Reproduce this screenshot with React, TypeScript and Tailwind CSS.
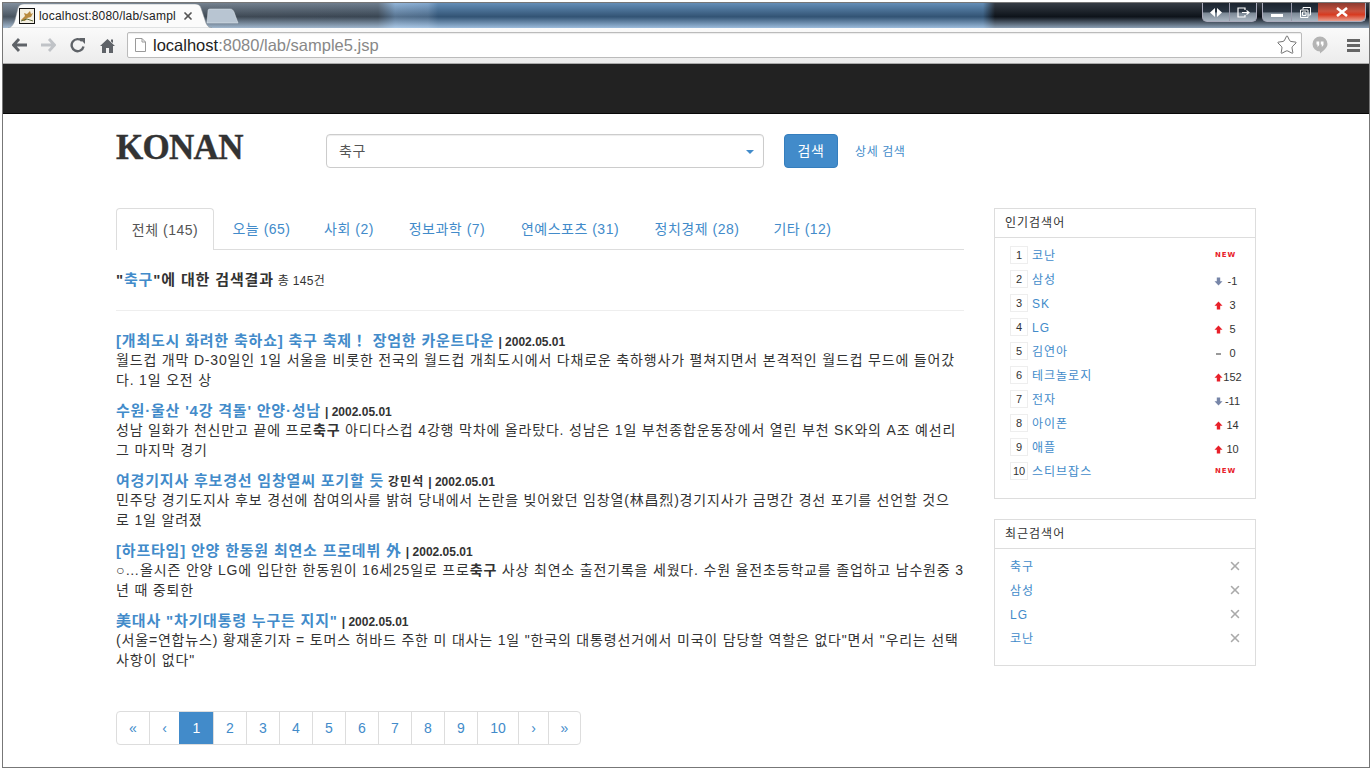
import type { ReactNode } from "react";
import { Star, X } from "lucide-react";

const sans = "font-['Liberation_Sans','Noto_Sans_CJK_KR',sans-serif]";

const tabs = [
  { label: "오늘", count: "(65)", w: "w-[95px]" },
  { label: "사회", count: "(2)", w: "w-[80px]" },
  { label: "정보과학", count: "(7)", w: "w-[116px]" },
  { label: "연예스포츠", count: "(31)", w: "w-[130px]" },
  { label: "정치경제", count: "(28)", w: "w-[124px]" },
  { label: "기타", count: "(12)", w: "w-[87px]" },
];

const results = [
  {
    title: "[개최도시 화려한 축하쇼] 축구 축제！ 장엄한 카운트다운",
    by: "",
    lines: [
      <>월드컵 개막 D-30일인 1일 서울을 비롯한 전국의 월드컵 개최도시에서 다채로운 축하행사가 펼쳐지면서 본격적인 월드컵 무드에 들어갔</>,
      <>다. 1일 오전 상</>,
    ],
  },
  {
    title: "수원·울산 '4강 격돌' 안양·성남",
    by: "",
    lines: [
      <>성남 일화가 천신만고 끝에 프로<b>축구</b> 아디다스컵 4강행 막차에 올라탔다. 성남은 1일 부천종합운동장에서 열린 부천 SK와의 A조 예선리</>,
      <>그 마지막 경기</>,
    ],
  },
  {
    title: "여경기지사 후보경선 임창열씨 포기할 듯",
    by: "강민석",
    lines: [
      <>민주당 경기도지사 후보 경선에 참여의사를 밝혀 당내에서 논란을 빚어왔던 임창열(林昌烈)경기지사가 금명간 경선 포기를 선언할 것으</>,
      <>로 1일 알려졌</>,
    ],
  },
  {
    title: "[하프타임] 안양 한동원 최연소 프로데뷔 外",
    by: "",
    lines: [
      <>○…올시즌 안양 LG에 입단한 한동원이 16세25일로 프로<b>축구</b> 사상 최연소 출전기록을 세웠다. 수원 율전초등학교를 졸업하고 남수원중 3</>,
      <>년 때 중퇴한</>,
    ],
  },
  {
    title: '美대사 "차기대통령 누구든 지지"',
    by: "",
    lines: [
      <>(서울=연합뉴스) 황재훈기자 = 토머스 허바드 주한 미 대사는 1일 "한국의 대통령선거에서 미국이 담당할 역할은 없다"면서 "우리는 선택</>,
      <>사항이 없다"</>,
    ],
  },
];

const popular: { word: string; kind: "new" | "up" | "down" | "same"; value?: string }[] = [
  { word: "코난", kind: "new" },
  { word: "삼성", kind: "down", value: "-1" },
  { word: "SK", kind: "up", value: "3" },
  { word: "LG", kind: "up", value: "5" },
  { word: "김연아", kind: "same", value: "0" },
  { word: "테크놀로지", kind: "up", value: "152" },
  { word: "전자", kind: "down", value: "-11" },
  { word: "아이폰", kind: "up", value: "14" },
  { word: "애플", kind: "up", value: "10" },
  { word: "스티브잡스", kind: "new" },
];

const pages = [
  { label: "«", w: "w-[32px]" },
  { label: "‹", w: "w-[30px]" },
  { label: "1", w: "w-[34px]", active: true },
  { label: "2", w: "w-[33px]" },
  { label: "3", w: "w-[33px]" },
  { label: "4", w: "w-[33px]" },
  { label: "5", w: "w-[33px]" },
  { label: "6", w: "w-[33px]" },
  { label: "7", w: "w-[33px]" },
  { label: "8", w: "w-[33px]" },
  { label: "9", w: "w-[33px]" },
  { label: "10", w: "w-[41px]" },
  { label: "›", w: "w-[30px]" },
  { label: "»", w: "w-[32px]" },
];

function Arrow({ up }: { up: boolean }) {
  return (
    <svg width="9" height="9" viewBox="0 0 9 9" className="shrink-0">
      {up ? (
        <path d="M4.5 0.5 L8.5 4.8 H6.2 V8.5 H2.8 V4.8 H0.5 Z" fill="#e8202a" />
      ) : (
        <path d="M2.8 0.5 H6.2 V4.2 H8.5 L4.5 8.5 L0.5 4.2 H2.8 Z" fill="#7786a8" />
      )}
    </svg>
  );
}

function Change({ kind, value }: { kind: string; value?: string }) {
  if (kind === "new") {
    return <span className="mt-[6px] ml-[1px] font-['DejaVu_Sans',sans-serif] text-[7px] leading-none font-bold tracking-[0.9px] text-[#e8202a]">NEW</span>;
  }
  return (
    <span className="mt-[6px] flex items-center text-[11px] leading-none text-[#333]">
      {kind === "same" ? (
        <span className="flex w-[9px] justify-center"><span className="h-[2px] w-[5px] bg-[#999]" /></span>
      ) : (
        <Arrow up={kind === "up"} />
      )}
      <span className="w-[19px] text-center">{value}</span>
    </span>
  );
}

function BackBtn({ color, flip }: { color: string; flip?: boolean }) {
  return (
    <svg width="16" height="14" viewBox="0 0 16 14" className={flip ? "-scale-x-100" : ""}>
      <path d="M7 1 L1.5 7 L7 13 M2 7 H15" fill="none" stroke={color} strokeWidth="2.8" />
    </svg>
  );
}

function WinGlyphBox({ children, w, className }: { children?: ReactNode; w: string; className?: string }) {
  return <div className={`flex h-[18px] items-center justify-center ${w} ${className ?? ""}`}>{children}</div>;
}

function Chrome() {
  return (
    <div className="shrink-0">
      <div className="relative h-[25px] bg-[linear-gradient(90deg,#6d7d8e_0px,#5d6c7c_200px,#55677a_375px,#7fa8d2_392px,#6f9ac6_425px,#4a7bab_435px,#4a7bab_980px,#141c26_992px,#141c26_1372px)]">
        <div className="absolute inset-0 bg-[linear-gradient(180deg,rgba(255,255,255,0.14)_0%,rgba(0,0,0,0.32)_55%,rgba(190,215,240,0.7)_100%)]" />
        <svg width="210" height="24" viewBox="0 0 210 24" className="absolute top-[1px] left-[3px]">
          <path d="M2 24 C5 24 8 20 9 16 L12 4 C13 1 15 0 18 0 H189 C192 0 194 1 195 4 L199 16 C200 20 202 24 206 24 Z" fill="#fbfbfb" stroke="#8a9097" strokeWidth="0.5" />
        </svg>
        <div className="absolute top-[5px] left-[16px] flex items-center">
          <svg width="16" height="16" viewBox="0 0 16 16" className="shrink-0">
            <rect x="0.5" y="0.5" width="15" height="15" fill="#f4efe2" stroke="#111" />
            <path d="M2 12 L6 8 L5 5 L8 6 L11 3 L12 6 L14 5 L12 9 L8 10 L6 13 Z" fill="#b98a3e" />
            <path d="M2 13 L8 11 L14 13" stroke="#5f6a3a" fill="none" />
          </svg>
          <span className="ml-[4px] w-[143px] text-[12px] leading-[16px] tracking-[0.2px] whitespace-nowrap text-[#222] font-['Liberation_Sans',sans-serif]">localhost:8080/lab/sampl</span>
          <X size={12} strokeWidth={3.5} className="text-[#555]" />
        </div>
        <svg width="34" height="16" viewBox="0 0 34 16" className="absolute top-[5px] left-[203px]">
          <path d="M1 15 L2 3 C2 1 3 1 5 1 H24 C26 1 27 2 28 4 L32 15 Z" fill="#b8c5d2" stroke="#e2e8ee" strokeWidth="0.5" />
        </svg>
        <div className="absolute top-0 right-[3px] flex gap-[5px]">
          <div className="flex rounded-b-[5px] border border-t-0 border-[#aab] bg-[linear-gradient(180deg,#1c2530_0%,#2a3542_50%,#7a8794_55%,#aab6c2_100%)]">
            <WinGlyphBox w="w-[27px]" className="border-r border-[#99a]">
              <svg width="12" height="9" viewBox="0 0 12 9"><path d="M5 0 V9 L0 4.5 Z M7 0 V9 L12 4.5 Z" fill="#fff" /></svg>
            </WinGlyphBox>
            <WinGlyphBox w="w-[26px]">
              <svg width="13" height="11" viewBox="0 0 13 11"><path d="M8 3 V1 H1 V10 H8 V8 M5 5.5 H12 M9.5 3.5 L12 5.5 L9.5 7.5" fill="none" stroke="#fff" strokeWidth="1.2" /></svg>
            </WinGlyphBox>
          </div>
          <div className="flex rounded-b-[5px] border border-t-0 border-[#aab] bg-[linear-gradient(180deg,#1c2530_0%,#2a3542_50%,#7a8794_55%,#aab6c2_100%)]">
            <WinGlyphBox w="w-[29px]" className="border-r border-[#99a]">
              <div className="mt-[6px] h-[3px] w-[12px] bg-white" />
            </WinGlyphBox>
            <WinGlyphBox w="w-[26px]">
              <svg width="11" height="11" viewBox="0 0 11 11"><path d="M3 2.5 V0.5 H10.5 V8 H8.5 M0.5 3 H8 V10.5 H0.5 Z M2.5 5 H6 V8.5 H2.5 Z" fill="none" stroke="#fff" /></svg>
            </WinGlyphBox>
            <WinGlyphBox w="w-[47px]" className="rounded-br-[5px] bg-[linear-gradient(180deg,#8c3a30_0%,#c8523e_45%,#d83a20_65%,#e8a090_100%)]">
              <svg width="14" height="10" viewBox="0 0 14 10"><path d="M2 1 L12 9 M12 1 L2 9" stroke="#fff" strokeWidth="2.6" /></svg>
            </WinGlyphBox>
          </div>
        </div>
      </div>
      <div className="flex h-[36px] items-center border-b border-[#aaa] bg-[linear-gradient(180deg,#fafafa,#ececec)] pr-[9px] pb-[1px] pl-[9px]">
        <BackBtn color="#5f6368" />
        <div className="ml-[12px]"><BackBtn color="#c0c3c7" flip /></div>
        <svg width="16" height="16" viewBox="0 0 16 16" className="ml-[14px]">
          <path d="M13.5 9.5 A6 6 0 1 1 12 4" fill="none" stroke="#5f6368" strokeWidth="2.4" />
          <path d="M9 1 H15 V7 Z" fill="#5f6368" />
        </svg>
        <svg width="15" height="15" viewBox="0 0 15 15" className="ml-[14px]">
          <path d="M7.5 1 L15 8 H13 V15 H9 V10 H6 V15 H2 V8 H0 Z M11 1.5 H13 V5 L11 3.5 Z" fill="#5f6368" />
        </svg>
        <div className="ml-[12px] flex h-[26px] w-[1175px] items-center rounded-[2px] border border-[#bbb] bg-white pr-[3px] pl-[7px] shadow-[inset_0_1px_1px_rgba(0,0,0,0.08)]">
          <svg width="11" height="14" viewBox="0 0 11 14" className="shrink-0">
            <path d="M0.5 0.5 H7 L10.5 4 V13.5 H0.5 Z M7 0.5 V4 H10.5" fill="#fff" stroke="#9a9a9a" />
          </svg>
          <span className="ml-[7px] text-[16.5px] leading-none whitespace-nowrap text-[#222] font-['Liberation_Sans',sans-serif]">
            localhost<span className="text-[#888]">:8080/lab/sample5.jsp</span>
          </span>
          <Star size={22} strokeWidth={1} className="ml-auto text-[#666]" />
        </div>
        <svg width="16" height="18" viewBox="0 0 16 18" className="ml-[10px]">
          <path d="M8 0.5 A7.5 7.5 0 0 1 15.5 8 C15.5 12 11 15 8 17.5 V15.5 A7.5 7.5 0 0 1 8 0.5 Z" fill="#b4b4b4" />
          <path d="M4.5 5.5 H7.2 V9 L5.5 11 V8.5 H4.5 Z M8.8 5.5 H11.5 V9 L9.8 11 V8.5 H8.8 Z" fill="#fff" />
        </svg>
        <div className="ml-[19px] flex w-[13px] flex-col gap-[2px]">
          <div className="h-[3px] bg-[#666]" />
          <div className="h-[3px] bg-[#666]" />
          <div className="h-[3px] bg-[#666]" />
        </div>
      </div>
    </div>
  );
}

export default function App() {
  return (
    <div className={`h-[770px] w-[1372px] overflow-hidden bg-white px-[2px] pt-[2px] ${sans}`}>
      <div className="flex h-[766px] flex-col border border-[#777]">
        <Chrome />
        <div className="h-[50px] shrink-0 border-b border-[#080808] bg-[#222]" />

        <div className="pt-[20px] pl-[113px] text-[14px] leading-[20px] text-[#333]">
          <div className="flex h-[34px] items-center">
            <div className="w-[210px] pb-[7px] font-['Liberation_Serif',serif] text-[35px] leading-none font-bold tracking-[-0.7px] text-[#333] [-webkit-text-stroke:0.4px_#333]">KONAN</div>
            <div className="flex h-[34px] w-[438px] items-center justify-between rounded-[4px] border border-[#ccc] pr-[9px] pl-[12px] shadow-[inset_0_1px_1px_rgba(0,0,0,0.075)]">
              <span className="tracking-[0.7px] text-[#555]">축구</span>
              <span className="mt-[1px] h-0 w-0 border-x-[4px] border-t-[4px] border-x-transparent border-t-[#428bca]" />
            </div>
            <button className="ml-[20px] h-[34px] w-[54px] rounded-[4px] border border-[#357ebd] bg-[#428bca] tracking-[0.5px] text-white">검색</button>
            <span className="mt-[1px] ml-[17px] text-[12px] tracking-[0.6px] text-[#428bca]">상세 검색</span>
          </div>

          <div className="mt-[40px] flex w-[1140px] gap-[30px]">
            <div className="w-[848px]">
              <div className="flex h-[42px] border-b border-[#ddd] tracking-[0.5px]">
                <div className="flex h-[42px] w-[98px] items-center justify-center rounded-t-[4px] border border-b-0 border-[#ddd] bg-white text-[#555]">전체 (145)</div>
                {tabs.map((t) => (
                  <div key={t.label} className={`flex h-[41px] items-center justify-center ${t.w} whitespace-nowrap text-[#428bca]`}>
                    {t.label} {t.count}
                  </div>
                ))}
              </div>

              <div className="mt-[20px] h-[20px] whitespace-nowrap">
                <span className="text-[15px] font-bold tracking-[0.85px]">
                  "<span className="text-[#428bca]">축구</span>"에 대한 검색결과
                </span>{" "}
                <span className="text-[12px] tracking-[0.3px]">총 145건</span>
              </div>
              <div className="mt-[20px] border-t border-[#eee]" />

              <div className="mt-[20px] flex flex-col gap-[11px]">
                {results.map((r) => (
                  <div key={r.title} className="whitespace-nowrap">
                    <div className="h-[19px]">
                      <span className="text-[15px] font-bold tracking-[0.8px] text-[#428bca]">{r.title}</span>
                      {r.by && <span className="ml-[4px] text-[12px] font-bold tracking-[1px]">{r.by}</span>}
                      <span className="ml-[4px] text-[12px] font-bold">| 2002.05.01</span>
                    </div>
                    {r.lines.map((l, i) => (
                      <div key={i} className="h-[20px] tracking-[0.82px]">{l}</div>
                    ))}
                  </div>
                ))}
              </div>

              <div className="mt-[41px] flex h-[34px] w-fit overflow-hidden rounded-[4px] border border-[#ddd]">
                {pages.map((p, i) => (
                  <div
                    key={p.label}
                    className={`flex items-center justify-center ${p.w} ${i > 0 ? "border-l border-[#ddd]" : ""} ${p.active ? "border-l-[#428bca] bg-[#428bca] text-white" : "text-[#428bca]"}`}
                  >
                    {p.label}
                  </div>
                ))}
              </div>
            </div>

            <div className="w-[262px] text-[12px] leading-[20px] tracking-[1px]">
              <div className="h-[291px] border border-[#ddd]">
                <div className="flex h-[29px] items-center border-b border-[#ddd] pl-[10px] text-[#333]">인기검색어</div>
                <div className="flex flex-col pt-[8px] pr-[13px] pl-[15px]">
                  {popular.map((p, i) => (
                    <div key={p.word} className="flex h-[24px] items-start tracking-normal">
                      <span className="flex h-[18px] w-[18px] items-center justify-center border border-[#eee] text-[11px] text-[#333]">{i + 1}</span>
                      <span className="ml-[4px] tracking-[1px] text-[#428bca]">{p.word}</span>
                      <div className="ml-auto flex w-[28px]">
                        <Change kind={p.kind} value={p.value} />
                      </div>
                    </div>
                  ))}
                </div>
              </div>

              <div className="mt-[20px] h-[147px] border border-[#ddd]">
                <div className="flex h-[29px] items-center border-b border-[#ddd] pl-[10px] text-[#333]">최근검색어</div>
                <div className="flex flex-col pt-[8px] pr-[13px] pl-[15px]">
                  {["축구", "삼성", "LG", "코난"].map((w) => (
                    <div key={w} className="flex h-[24px] items-start justify-between">
                      <span className="text-[#428bca]">{w}</span>
                      <X size={14} strokeWidth={2.6} className="mt-[2px] text-[#aaa]" />
                    </div>
                  ))}
                </div>
              </div>
            </div>
          </div>
        </div>
      </div>
    </div>
  );
}
